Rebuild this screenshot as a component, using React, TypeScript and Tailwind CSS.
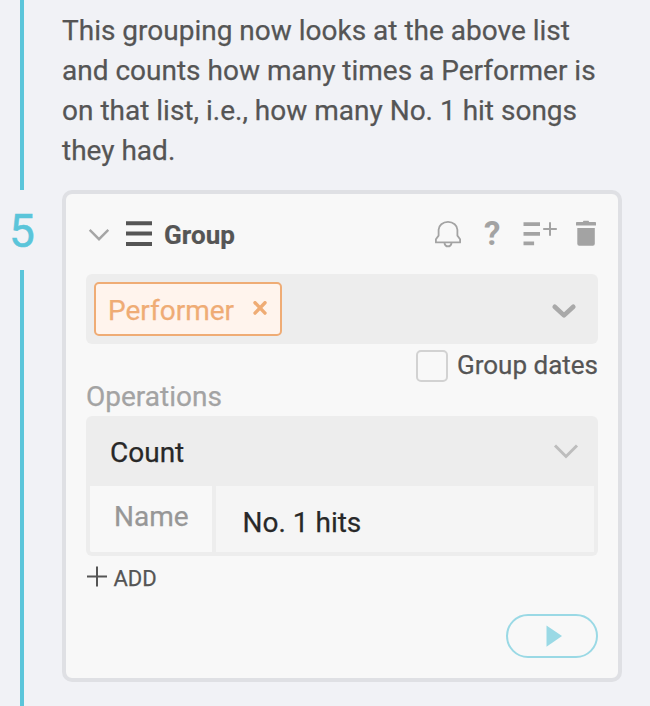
import type { ReactNode } from 'react';

function TimelineStep({ step }: { step: number }) {
  return (
    <div className="flex w-[62px] shrink-0 flex-col">
      <div className="ml-5 h-[190px] w-1 bg-[#5bc5da]" />
      <div className="flex h-20 w-11 items-center justify-center pt-0.5 text-[46px] leading-none text-[#5bc5da] [-webkit-text-stroke:0.5px_#5bc5da]">
        {step}
      </div>
      <div className="ml-5 w-1 flex-1 bg-[#5bc5da]" />
    </div>
  );
}

function CardHeader() {
  return (
    <div className="flex h-20 items-center">
      <svg width="26" height="80" className="shrink-0" fill="none" stroke="#a5a5a5" strokeWidth="2.4">
        <path d="M3.7 35.8 L13 45.2 L22.3 35.8" />
      </svg>
      <svg width="52" height="80" className="shrink-0" fill="#555">
        <path d="M14 27.300h26v4H14zM14 37.600h26v4H14zM14 48h26V52H14z" />
      </svg>
      <h2 className="flex-1 pt-0.5 text-[26px] leading-[30px] font-bold tracking-[0.05px] text-[#555] [-webkit-text-stroke:0.2px_#555]">
        Group
      </h2>
      <svg width="28" height="80" className="mr-[22px] shrink-0" fill="none" stroke="#a3a3a3" strokeWidth="1.8">
        <path d="M1.9 48.4V45.2L4.6 41.6V35.8C4.6 31.4 8.8 27.900 14 27.900S23.400 31.400 23.400 35.800V41.600L26.100 45.200V48.400Z" strokeLinejoin="round" />
        <path d="M10.400 49C10.800 51.200 12 52.400 14 52.400S17.200 51.200 17.600 49" />
      </svg>
      <span className="mr-[21px] w-4 pb-0.5 text-center text-[33px] leading-none font-bold text-[#a3a3a3] [-webkit-text-stroke:0px]">?</span>
      <svg width="36" height="80" className="mr-[17px] shrink-0" fill="#a3a3a3">
        <path d="M2.500 28.200H19V32H2.500zM2.500 38H19v3.800H2.500zM2.500 47.400h10.600v3.900H2.500z" />
        <path d="M28 28.200h2v13.600h-2zM22.200 34h13.600v2H22.200z" />
      </svg>
      <svg width="24" height="80" className="shrink-0" fill="#a3a3a3">
        <path d="M2 28.800a.8.8 0 0 1 .8-.8h6l.7-1.2h5l.7 1.200h6a.8.8 0 0 1 .8.8v2.700H2z" />
        <path d="M3.300 34h17.500v15.700a2 2 0 0 1-2 2H5.300a2 2 0 0 1-2-2z" />
      </svg>
    </div>
  );
}

function Tag({ children }: { children: ReactNode }) {
  return (
    <div className="ml-2 flex h-[54px] w-[188px] items-center rounded-[5px] border-2 border-[#efac75] bg-[#fff4ed] pl-3 text-[28px] text-[#efac75]">
      <span className="flex-1 pt-1 leading-[50px]">{children}</span>
      <svg width="14" height="16" className="mr-[13px] shrink-0" fill="none" stroke="#efac75" strokeWidth="3.4" strokeLinecap="round">
        <path d="M2 1.700 L12 12.100 M12 1.700 L2 12.100" />
      </svg>
    </div>
  );
}

export default function App() {
  return (
    <div className="flex h-[706px] w-[650px] overflow-hidden bg-[#f1f2f6] font-['Roboto',sans-serif] [-webkit-text-stroke:0.25px_currentColor]">
      <TimelineStep step={5} />
      <main className="w-[560px] shrink-0">
        <p className="h-[190px] pt-[11px] text-[28px] leading-10 text-[#555]">
          This grouping now looks at the above list
          <br />
          and counts how many times a Performer is
          <br />
          on that list, i.e., how many No. 1 hit songs
          <br />
          they had.
        </p>
        <section className="h-[492px] rounded-[10px] border-4 border-[#dfe0e4] bg-[#f8f8f8] px-5">
          <CardHeader />
          <div className="flex h-[70px] items-center rounded-md bg-[#ededed]">
            <Tag>Performer</Tag>
            <svg width="28" height="70" className="mr-5 ml-auto" fill="none" stroke="#a9a9a9" strokeWidth="4.6" strokeLinecap="round" strokeLinejoin="round">
              <path d="M4.700 32.700 L14 41.400 L23.300 32.700" />
            </svg>
          </div>
          <label className="mt-1.5 flex h-8 items-center justify-end text-[26px] text-[#555]">
            <span className="mr-[9px] h-8 w-8 rounded-[5px] border-2 border-[#d2d2d2]" />
            <span className="pb-0.5">Group dates</span>
          </label>
          <div className="h-[34px] pt-px text-[28px] leading-7 text-[#a3a3a3]">Operations</div>
          <div className="flex h-[70px] items-center rounded-t-md bg-[#ededed] pl-6 text-[28px] text-[#282828]">
            <span className="flex-1 pt-1">Count</span>
            <svg width="28" height="70" className="mr-[18px]" fill="none" stroke="#bdbdbd" strokeWidth="3">
              <path d="M3 29.500 L14 40.500 L25 29.500" />
            </svg>
          </div>
          <div className="flex h-[70px] rounded-b-md border-4 border-t-0 border-[#ededed] text-[28px]">
            <div className="w-[126px] border-r-4 border-[#ededed] pl-6 leading-[62px] text-[#979797]">Name</div>
            <div className="flex-1 bg-[#f5f5f5] pt-px pl-[26.5px] leading-[72px] text-[#282828]">No. 1 hits</div>
          </div>
          <div className="flex h-[58px] text-[22px] leading-[46px] text-[#555]">
            <svg width="27.5" height="44" className="shrink-0" fill="#555">
              <path d="M10 10.500h2v20h-2zM1 19.500h20v2H1z" />
            </svg>
            ADD
          </div>
          <div className="flex justify-end">
            <button className="flex h-11 w-[92px] items-center justify-center rounded-full border-2 border-[#9ad9e5]">
              <svg width="16" height="22" className="ml-1" fill="#9ad9e5">
                <path d="M.5 .4 L16 11 L.5 21.800z" />
              </svg>
            </button>
          </div>
        </section>
      </main>
    </div>
  );
}
